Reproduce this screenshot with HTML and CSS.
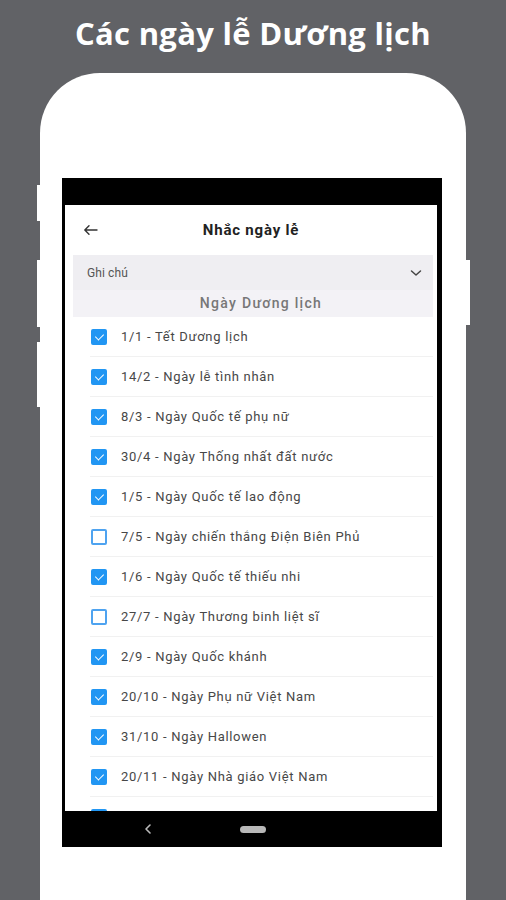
FILE: index.html
```html
<!DOCTYPE html>
<html lang="vi">
<head>
<meta charset="utf-8">
<link rel="stylesheet" href="styles.css">
</head>
<body>
<h1 class="headline">Các ngày lễ Dương lịch</h1>
<div class="phone">
  <span class="btn btn-l1"></span>
  <span class="btn btn-l2"></span>
  <span class="btn btn-l3"></span>
  <span class="btn btn-r1"></span>
  <div class="screen">
    <div class="statusbar"></div>
    <div class="app">
      <div class="appbar">
        <svg class="back" width="15" height="12" viewBox="0 0 15 12"><path d="M14 6H2M6 1.8L1.8 6 6 10.2" fill="none" stroke="#333" stroke-width="1.4" stroke-linecap="round" stroke-linejoin="round"/></svg>
        <div class="title">Nhắc ngày lễ</div>
      </div>
      <div class="dropdown">
        <span>Ghi chú</span>
        <svg width="12" height="8" viewBox="0 0 12 8"><path d="M1.5 2l4.5 4 4.5-4" fill="none" stroke="#444" stroke-width="1.5" stroke-linecap="round" stroke-linejoin="round"/></svg>
      </div>
      <div class="section">Ngày Dương lịch</div>
      <ul class="list">
        <li class="row"><span class="cb on"></span>1/1 - Tết Dương lịch</li>
        <li class="row"><span class="cb on"></span>14/2 - Ngày lễ tình nhân</li>
        <li class="row"><span class="cb on"></span>8/3 - Ngày Quốc tế phụ nữ</li>
        <li class="row"><span class="cb on"></span>30/4 - Ngày Thống nhất đất nước</li>
        <li class="row"><span class="cb on"></span>1/5 - Ngày Quốc tế lao động</li>
        <li class="row"><span class="cb"></span>7/5 - Ngày chiến thắng Điện Biên Phủ</li>
        <li class="row"><span class="cb on"></span>1/6 - Ngày Quốc tế thiếu nhi</li>
        <li class="row"><span class="cb"></span>27/7 - Ngày Thương binh liệt sĩ</li>
        <li class="row"><span class="cb on"></span>2/9 - Ngày Quốc khánh</li>
        <li class="row"><span class="cb on"></span>20/10 - Ngày Phụ nữ Việt Nam</li>
        <li class="row"><span class="cb on"></span>31/10 - Ngày Hallowen</li>
        <li class="row"><span class="cb on"></span>20/11 - Ngày Nhà giáo Việt Nam</li>
        <li class="row"><span class="cb on"></span></li>
      </ul>
    </div>
    <div class="navbar">
      <svg width="8" height="12" viewBox="0 0 8 12"><path d="M6 2L2 6l4 4" fill="none" stroke="#bbb" stroke-width="1.6" stroke-linecap="round" stroke-linejoin="round"/></svg>
      <span class="pill"></span>
    </div>
  </div>
</div>
</body>
</html>
```
FILE: styles.css
```css
html, body {
  margin: 0;
  padding: 0;
}
body {
  width: 506px;
  height: 900px;
  overflow: hidden;
  background: #616266;
  font-family: Roboto, "Noto Sans", sans-serif;
}
.headline {
  margin: 0;
  height: 73px;
  padding-top: 12px;
  box-sizing: border-box;
  text-align: center;
  color: #fff;
  font-family: "Open Sans", sans-serif;
  font-weight: 700;
  font-size: 31px;
  line-height: 42px;
  letter-spacing: 0.3px;
}
.phone {
  position: relative;
  margin-left: 40px;
  width: 426px;
  height: 827px;
  background: #fff;
  border-radius: 60px 60px 0 0;
  padding: 105px 0 0 22px;
  box-sizing: border-box;
}
.btn {
  position: absolute;
  width: 4px;
  background: #fff;
}
.btn-l1 { left: -3px; top: 112px; height: 36px; }
.btn-l2 { left: -3px; top: 187px; height: 67px; }
.btn-l3 { left: -3px; top: 269px; height: 65px; }
.btn-r1 { right: -4px; top: 187px; height: 65px; }
.screen {
  width: 380px;
  height: 669px;
  background: #000;
  display: flex;
  flex-direction: column;
}
.statusbar {
  height: 27px;
  flex: none;
}
.app {
  flex: 1;
  margin: 0 5px 0 3px;
  background: #fff;
  overflow: hidden;
}
.appbar {
  height: 50px;
  display: flex;
  align-items: center;
  position: relative;
  padding-left: 18px;
}
.back {
  flex: none;
}
.title {
  position: absolute;
  left: 0;
  right: 0;
  text-align: center;
  font-weight: 700;
  font-size: 15px;
  letter-spacing: 0.8px;
  color: #222;
  pointer-events: none;
}
.dropdown {
  margin: 0 4px 0 8px;
  height: 35px;
  background: #efeef2;
  display: flex;
  align-items: center;
  justify-content: space-between;
  padding: 0 11px 0 14px;
  font-size: 12px;
  letter-spacing: 0.1px;
  color: #555;
}
.section {
  margin: 0 4px 0 8px;
  height: 27px;
  padding-left: 16px;
  background: #f3f2f6;
  text-align: center;
  line-height: 27px;
  font-size: 14px;
  letter-spacing: 1.3px;
  font-weight: 500;
  color: #777;
}
.list {
  list-style: none;
  margin: 0;
  padding: 0;
}
.row {
  height: 40px;
  display: flex;
  align-items: center;
  margin: 0 4px 0 25px;
  border-bottom: 1px solid #f1f1f1;
  font-size: 13px;
  letter-spacing: 0.7px;
  color: #474747;
  box-sizing: border-box;
}
.cb {
  flex: none;
  width: 16px;
  height: 16px;
  box-sizing: border-box;
  margin: 0 14px 0 1px;
  border: 2px solid #4ea3f0;
  border-radius: 2px;
  position: relative;
}
.cb.on {
  background: #2196f3;
  border-color: #2196f3;
}
.cb.on::after {
  content: "";
  position: absolute;
  left: 3.5px;
  top: 1px;
  width: 4px;
  height: 7px;
  border: solid #fff;
  border-width: 0 1.6px 1.6px 0;
  transform: rotate(45deg);
}
.navbar {
  height: 36px;
  flex: none;
  display: flex;
  align-items: center;
  padding-left: 82px;
}
.pill {
  width: 26px;
  height: 7px;
  border-radius: 4px;
  background: #b8b8b8;
  margin-left: 88px;
}
```
